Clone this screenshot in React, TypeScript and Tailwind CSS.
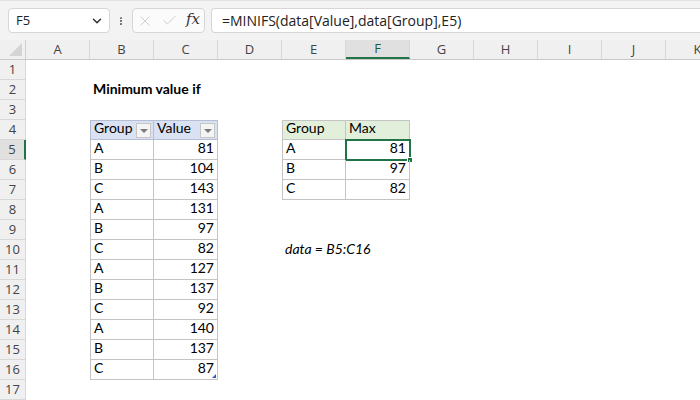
import { Check, ChevronDown, EllipsisVertical, X } from "lucide-react";

const cols = ["A", "B", "C", "D", "E", "F", "G", "H", "I", "J", "K"];

const data: [string, number][] = [
  ["A", 81],
  ["B", 104],
  ["C", 143],
  ["A", 131],
  ["B", 97],
  ["C", 82],
  ["A", 127],
  ["B", 137],
  ["C", 92],
  ["A", 140],
  ["B", 137],
  ["C", 87],
];

const maxes: [string, number][] = [
  ["A", 81],
  ["B", 97],
  ["C", 82],
];

const FilterButton = () => (
  <span className="absolute right-[2px] top-[2px] w-[15px] h-[15px] bg-[#f4f4f4] border border-[#c6c6c6] flex items-center justify-center">
    <span className="w-0 h-0 border-l-[4px] border-r-[4px] border-t-[4px] border-l-transparent border-r-transparent border-t-[#7a7a7a]" />
  </span>
);

type CellProps = {
  children?: React.ReactNode;
  className?: string;
};

const Cell = ({ children, className = "" }: CellProps) => (
  <div
    className={
      "relative w-[64px] h-[20px] shrink-0 flex items-end pb-[1px] px-[3px] whitespace-nowrap overflow-visible " +
      className
    }
  >
    {children}
  </div>
);

const renderCell = (row: number, col: string) => {
  // title
  if (row === 2 && col === "B")
    return <Cell key={col} className="font-bold z-10">Minimum value if</Cell>;
  if (row === 10 && col === "E")
    return <Cell key={col} className="italic z-10">data = B5:C16</Cell>;

  // first table, headers
  if (row === 4 && col === "B")
    return (
      <Cell key={col} className="bg-[#d9e1f2] border-l border-t border-r border-b border-[#b4bfd3]">
        Group
        <FilterButton />
      </Cell>
    );
  if (row === 4 && col === "C")
    return (
      <Cell key={col} className="bg-[#d9e1f2] border-t border-r border-b border-[#b4bfd3]">
        Value
        <FilterButton />
      </Cell>
    );
  if (row >= 5 && row <= 16 && col === "B")
    return (
      <Cell key={col} className="border-l border-r border-b border-[#c4c4c4]">
        {data[row - 5][0]}
      </Cell>
    );
  if (row >= 5 && row <= 16 && col === "C")
    return (
      <Cell key={col} className="border-r border-b border-[#c4c4c4] justify-end">
        {data[row - 5][1]}
        {row === 16 && (
          <span className="absolute right-[1px] bottom-[1px] w-0 h-0 border-l-[4px] border-b-[4px] border-l-transparent border-b-[#3b5bb5]" />
        )}
      </Cell>
    );

  // second table
  if (row === 4 && col === "E")
    return (
      <Cell key={col} className="bg-[#e2efda] border-l border-t border-r border-b border-[#c4c4c4]">
        Group
      </Cell>
    );
  if (row === 4 && col === "F")
    return (
      <Cell key={col} className="bg-[#e2efda] border-t border-r border-b border-[#c4c4c4]">
        Max
      </Cell>
    );
  if (row >= 5 && row <= 7 && col === "E")
    return (
      <Cell key={col} className="border-l border-r border-b border-[#c4c4c4]">
        {maxes[row - 5][0]}
      </Cell>
    );
  if (row >= 5 && row <= 7 && col === "F")
    return (
      <Cell key={col} className="border-r border-b border-[#c4c4c4] justify-end">
        {maxes[row - 5][1]}
        {row === 5 && (
          <>
            <span className="absolute -left-[1px] -top-[1px] w-[66px] h-[22px] border-2 border-[#217346]" />
            <span className="absolute -right-[4px] -bottom-[4px] w-[6px] h-[6px] bg-[#217346] border border-white" />
          </>
        )}
      </Cell>
    );

  return <Cell key={col} />;
};

export default function App() {
  const rows = Array.from({ length: 17 }, (_, i) => i + 1);

  return (
    <div className="w-[700px] h-[400px] overflow-hidden bg-white font-['Lato','Liberation_Sans',sans-serif] text-[14px] text-black">
      {/* formula bar */}
      <div className="h-[40px] bg-[#f3f3f3] border-t border-[#e2e2e2] flex items-start pt-[7px] pl-[8px] gap-[6px] font-['Open_Sans','Liberation_Sans',sans-serif]">
        <div className="w-[102px] h-[25px] bg-white border border-[#d6d6d6] rounded-[4px] flex items-center justify-between pl-[7px] pr-[5px] text-[13px] text-[#222]">
          <span>F5</span>
          <ChevronDown size={14} strokeWidth={2.6} className="text-[#333]" />
        </div>
        <div className="w-[10px] h-[25px] flex items-center justify-center text-[#444]">
          <EllipsisVertical size={14} strokeWidth={2.6} />
        </div>
        <div className="w-[73px] h-[25px] bg-[#fbfbfb] border border-[#d6d6d6] rounded-[4px] flex items-center pl-[4px] pr-[4px]">
          <X size={16} strokeWidth={1.2} className="text-[#c4c4c4]" />
          <Check size={17} strokeWidth={1.2} className="text-[#c4c4c4] ml-[8px]" />
          <span className="ml-auto font-['DejaVu_Serif','Liberation_Serif',serif] italic text-[15px] text-[#333] leading-none pb-[2px]">
            fx
          </span>
        </div>
        <div className="flex-1 h-[25px] bg-white border border-[#d6d6d6] rounded-l-[4px] border-r-0 flex items-center pl-[10px] text-[14px] text-[#222]">
          =MINIFS(data[Value],data[Group],E5)
        </div>
      </div>

      {/* column headers */}
      <div className="flex h-[20px] bg-[#f0f0f0] border-b border-[#c8c8c8] font-['Open_Sans','Liberation_Sans',sans-serif] text-[13px] text-[#444]">
        <div className="w-[26px] shrink-0 flex items-end justify-end pr-[3px] pb-[3px] border-r border-[#d0d0d0]">
          <svg width="13" height="13" viewBox="0 0 13 13">
            <polygon points="13,0 13,13 0,13" fill="#d4d4d4" />
          </svg>
        </div>
        {cols.map((c) => (
          <div
            key={c}
            className={
              "w-[64px] shrink-0 flex items-center justify-center border-r border-[#d8d8d8] " +
              (c === "F" ? "bg-[#e0e0e0] text-[#1e5c38] border-b-2 border-b-[#217346]" : "")
            }
          >
            {c}
          </div>
        ))}
      </div>

      {/* sheet */}
      {rows.map((r) => (
        <div key={r} className="flex h-[20px]">
          <div
            className={
              "w-[26px] shrink-0 flex items-center justify-center border-r border-b border-[#d8d8d8] font-['Open_Sans','Liberation_Sans',sans-serif] text-[13px] text-[#444] " +
              (r === 5 ? "bg-[#e0e0e0] border-r-2 border-r-[#217346]" : "bg-[#f0f0f0]")
            }
          >
            {r}
          </div>
          {cols.map((c) => renderCell(r, c))}
        </div>
      ))}
    </div>
  );
}
